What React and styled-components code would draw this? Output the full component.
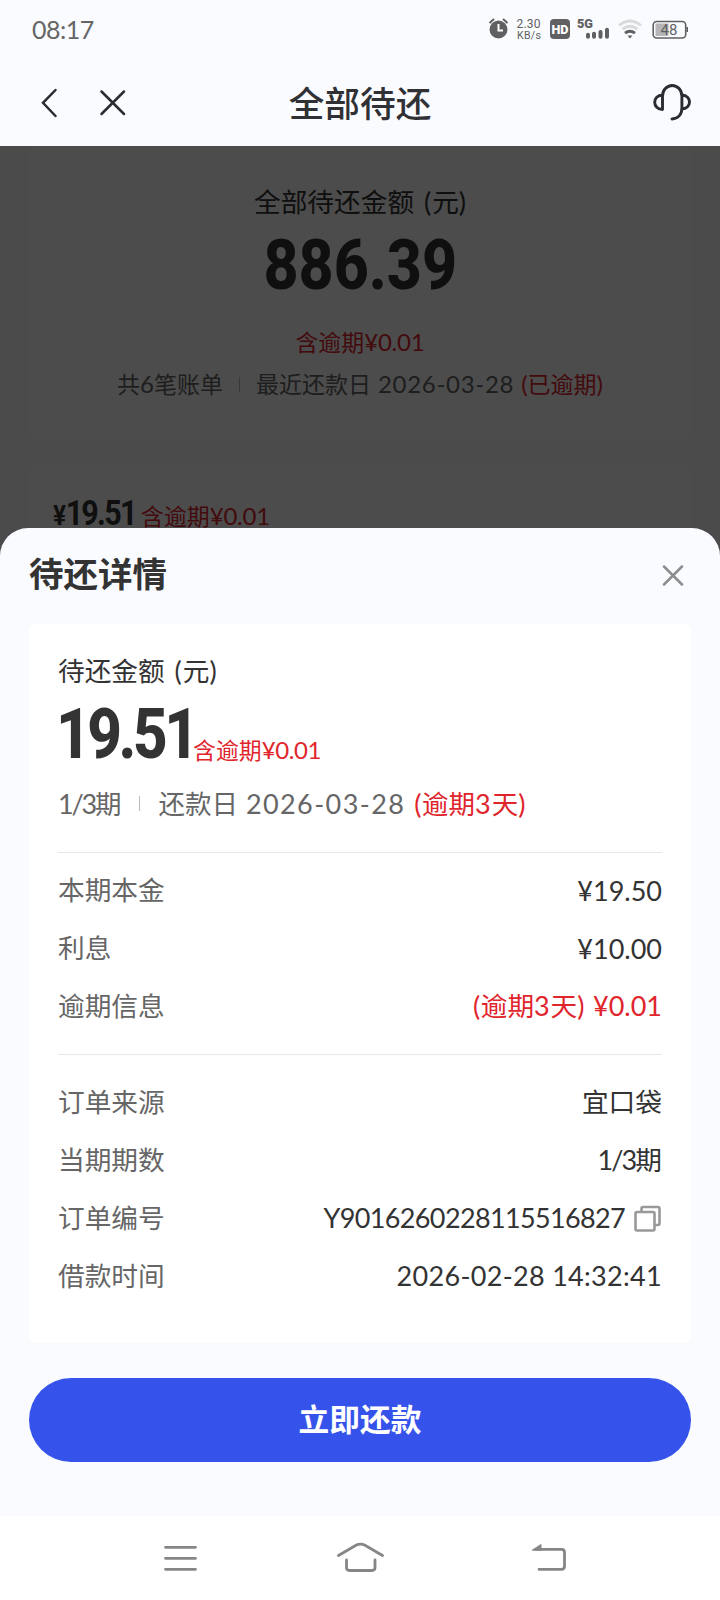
import React from "react";
import styled, { createGlobalStyle } from "styled-components";

const sheetRows = [
  { label: "本期本金", value: "¥19.50" },
  { label: "利息", value: "¥10.00" },
];

export default function App() {
  return (
    <>
      <GlobalStyle />
      <Screen>
        <StatusBar>
          <Clock>08:17</Clock>
          <StatusIcons />
        </StatusBar>
        <Header>
          <BackIcon viewBox="0 0 90 40">
            <path d="M16.500 8L4 20.800L16.500 34" />
            <path d="M62.500 9.500L85 32M85 9.500L62.500 32" />
          </BackIcon>
          <HeaderTitle>全部待还</HeaderTitle>
          <ServiceIcon viewBox="0 0 38 38">
            <path d="M9.500 26.500V13a9.700 10.500 0 0 1 19.400 0v12c0 6.500-4 10.500-9.900 11M9.500 12c-5 0-7.800 3.500-7.800 7.200s2.800 7.300 7.800 7.300M29 12c4.800 0 7.500 3.500 7.500 7s-2.700 7-7.500 7" />
          </ServiceIcon>
        </Header>

        <Content>
          <Summary>
            <SummaryLabel>
              全部待还金额 <Paren>(</Paren>元<Num>)</Num>
            </SummaryLabel>
            <Total>886.39</Total>
            <SummaryOverdue>
              含逾期<Num $size={24} $ls={-0.2}>¥0.01</Num>
            </SummaryOverdue>
            <SummaryMeta>
              <span>共<Num $size={24}>6</Num>笔账单</span>
              <Bar $m={16} />
              <span>最近还款日</span>
              <MetaDate><Num $size={24} $ls={0.7}>2026-03-28</Num></MetaDate>
              <Red><Num $size={24}>(</Num>已逾期<Num $size={24}>)</Num></Red>
            </SummaryMeta>
          </Summary>
          <Bill>
            <BillAmount><small>¥</small>19.51</BillAmount>
            <Red>含逾期<Num $size={24} $ls={-0.2}>¥0.01</Num></Red>
          </Bill>

          <Mask />
          <Sheet>
            <SheetHead>
              <SheetTitle>待还详情</SheetTitle>
              <CloseIcon viewBox="0 0 22 22">
                <path d="M2 1.500L20 19.500M20 1.500L2 19.500" />
              </CloseIcon>
            </SheetHead>
            <Card>
              <CardLabel>
                待还金额 <Paren>(</Paren>元<Num>)</Num>
              </CardLabel>
              <AmountRow>
                <Amount>19.51</Amount>
                <AmountOverdue>含逾期<Num $size={24} $ls={-0.4}>¥0.01</Num></AmountOverdue>
              </AmountRow>
              <CardMeta>
                <span><Num $ls={-2.2}>1/3</Num>期</span>
                <Bar $m={18} />
                <span>还款日</span>
                <MetaDate $wide><Num $ls={1.4}>2026-03-28</Num></MetaDate>
                <Red><Num $ls={0.5}>(</Num>逾期<Num $ls={1}>3</Num>天<Num>)</Num></Red>
              </CardMeta>
              <RepayGroup>
                {sheetRows.map((row) => (
                  <Row key={row.label}>
                    <Label>{row.label}</Label>
                    <Value><Num>{row.value}</Num></Value>
                  </Row>
                ))}
                <Row>
                  <Label>逾期信息</Label>
                  <Value $red>
                    <Num $ls={0.6}>(</Num>逾期<Num $ls={0.8}>3</Num>天<Num $ls={0.8}>) </Num><Num>¥0.01</Num>
                  </Value>
                </Row>
              </RepayGroup>
              <OrderGroup>
                <Row>
                  <Label>订单来源</Label>
                  <Value>宜口袋</Value>
                </Row>
                <Row>
                  <Label>当期期数</Label>
                  <Value><Num $ls={-1.9}>1/3</Num>期</Value>
                </Row>
                <Row>
                  <Label>订单编号</Label>
                  <Value>
                    <Num $ls={-0.65}>Y9016260228115516827</Num>
                    <CopyIcon viewBox="0 0 28 28">
                      <path d="M7.500 7.500V4.500q0-1.500 1.500-1.500h15q1.500 0 1.500 1.500v15q0 1.500-1.500 1.500H21" />
                      <rect x="1.500" y="8" width="19" height="18.500" rx="1.500" />
                    </CopyIcon>
                  </Value>
                </Row>
                <Row>
                  <Label>借款时间</Label>
                  <Value><Num $ls={0.3}>2026-02-28 14:32:41</Num></Value>
                </Row>
              </OrderGroup>
            </Card>
            <PayButton>立即还款</PayButton>
          </Sheet>
        </Content>

        <NavBar>
          <NavIcon viewBox="0 0 60 34">
            <path d="M14.500 6.300H44.500M14.500 17.300H44.500M14.500 28.300H44.500" />
          </NavIcon>
          <NavIcon viewBox="0 0 60 34">
            <path d="M8.500 14.500L26 4.300q4.500-2.500 9 0L52.500 14.500M16.500 19v7.500q0 3 3 3h22.500q3 0 3-3V19" />
          </NavIcon>
          <NavIcon viewBox="0 0 60 34">
            <path d="M27 8.300H52.500q3 0 3 3v14q0 3-3 3H30" />
            <Arrow d="M23.500 9L32 3.500V9Z" />
          </NavIcon>
        </NavBar>
      </Screen>
    </>
  );
}

function StatusIcons() {
  return (
    <StatusSvg viewBox="0 0 210 30">
      {/* alarm */}
      <circle cx="10.500" cy="15.500" r="9" fill="#606062" />
      <path d="M1.500 9L6 5M15 5l4.500 4" stroke="#606062" strokeWidth="2" />
      <path d="M10.500 10v6.500h4.500" stroke="#fff" strokeWidth="2" fill="none" />
      <text x="28.500" y="14" fontSize="12" textLength="24">2.30</text>
      <text x="29" y="24.500" fontSize="10.500" textLength="24">KB/s</text>
      {/* HD */}
      <rect x="62" y="5" width="20" height="20" rx="4" fill="#606062" />
      <StatusMark x="63.500" y="19.800" fontSize="12.500" textLength="17" lengthAdjust="spacingAndGlyphs" $light>
        HD
      </StatusMark>
      {/* signal */}
      <StatusMark x="89" y="13.800" fontSize="12" textLength="16" lengthAdjust="spacingAndGlyphs">
        5G
      </StatusMark>
      <path
        d="M100 20.800v2M106 19.800v3M112.500 18v4.800M119 15.800v7"
        stroke="#606062"
        strokeWidth="4"
        strokeLinecap="round"
      />
      {/* wifi */}
      <path d="M131 11.500q11-9 22 0M134.500 15.200q7.500-6 15 0" stroke="#d9dadc" strokeWidth="2.800" fill="none" />
      <path d="M137 19.200q5-4 10 0" stroke="#606062" strokeWidth="2.800" fill="none" />
      <path d="M139.500 21.500h5L142 24.500z" fill="#606062" />
      {/* battery */}
      <rect x="167.500" y="9.500" width="13" height="12.500" fill="#b5b5b7" />
      <rect x="165.200" y="7.500" width="32.500" height="16.500" rx="3.500" fill="none" stroke="#606062" strokeWidth="1.600" />
      <path d="M199.200 13v5" stroke="#606062" strokeWidth="1.600" />
      <text x="172.500" y="21" fontSize="15" textLength="17">48</text>
    </StatusSvg>
  );
}

const GlobalStyle = createGlobalStyle`
  * {
    box-sizing: border-box;
  }

  body {
    margin: 0;
    font-family: Lato, "Noto Sans CJK SC", sans-serif;
    color: #333;
  }
`;

const Screen = styled.div`
  width: 720px;
  height: 1600px;
  display: flex;
  flex-direction: column;
  background: #fafbff;
  overflow: hidden;
`;

const StatusBar = styled.div`
  height: 58px;
  padding: 0 28px 0 32px;
  display: flex;
  align-items: center;
  justify-content: space-between;
`;

const Clock = styled.div`
  font-size: 25px;
  color: #666;
  letter-spacing: -0.5px;
`;

const StatusSvg = styled.svg`
  width: 210px;
  height: 30px;
  margin-right: -6px;

  text {
    fill: #606062;
    font-family: Roboto, sans-serif;
  }
`;

const StatusMark = styled.text`
  && {
    fill: ${(props) => (props.$light ? "#fff" : "#606062")};
    font-weight: 900;
  }
`;

const Header = styled.div`
  height: 88px;
  padding: 0 29px 0 39px;
  display: grid;
  grid-template-columns: 244px 1fr 244px;
  align-items: center;
`;

const BackIcon = styled.svg`
  width: 90px;
  height: 40px;
  fill: none;
  stroke: #2b2c30;
  stroke-width: 2.5;
  stroke-linecap: round;
`;

const HeaderTitle = styled.div`
  padding: 3px 10px 0 0;
  font-size: 35.7px;
  line-height: 52px;
  font-weight: 500;
  text-align: center;
  white-space: nowrap;
  color: #303135;
`;

const ServiceIcon = styled.svg`
  width: 38px;
  height: 38px;
  justify-self: end;
  fill: none;
  stroke: #2b2c30;
  stroke-width: 2.9;
  stroke-linecap: round;
  stroke-linejoin: round;
`;

const Content = styled.div`
  position: relative;
  height: 1370px;
  overflow: hidden;
`;

const Summary = styled.div`
  height: 294px;
  margin: 0 29px;
  padding-top: 36px;
  background: #fff;
  border-radius: 0 0 6px 6px;
  display: flex;
  flex-direction: column;
  align-items: center;
`;

const SummaryLabel = styled.div`
  height: 40px;
  line-height: 40px;
  font-size: 26.7px;
  white-space: nowrap;
`;

const Total = styled.div`
  height: 84px;
  line-height: 86px;
  font-family: Roboto, sans-serif;
  font-size: 70px;
  font-weight: 800;
  transform: scaleX(0.87);
`;

const Red = styled.span`
  color: #e0252d;
`;

const SummaryOverdue = styled.div`
  margin-top: 16px;
  height: 40px;
  line-height: 40px;
  font-size: 22.9px;
  color: #e0252d;
`;

const SummaryMeta = styled.div`
  height: 44px;
  display: flex;
  align-items: baseline;
  line-height: 44px;
  font-size: 23px;
  color: #666;
  white-space: nowrap;
`;

const Num = styled.span`
  font-family: Lato, sans-serif;
  font-size: ${(props) => props.$size || 27}px;
  letter-spacing: ${(props) => props.$ls || 0}px;
  line-height: 1;
`;

const Paren = styled(Num)`
  margin: 0 1px 0 3px;
`;

const Bar = styled.span`
  width: 1px;
  height: 15px;
  margin: 0 ${(props) => props.$m}px;
  align-self: center;
  background: #bbb;
`;

const MetaDate = styled.span`
  margin: ${(props) => (props.$wide ? "0 9px 0 8px" : "0 7px")};
`;

const Bill = styled.div`
  height: 200px;
  margin: 23px 29px 0;
  padding: 31px 24px;
  background: #fff;
  border-radius: 6px 6px 0 0;
  display: flex;
  align-items: baseline;
  line-height: 40px;
  font-size: 22.9px;
`;

const BillAmount = styled.div`
  width: 88px;
  font-family: Roboto, sans-serif;
  font-size: 35px;
  font-weight: 700;
  letter-spacing: -2px;
  white-space: nowrap;
  transform: scaleX(0.87);
  transform-origin: left;

  small {
    font-size: 28px;
    letter-spacing: -0.5px;
  }
`;

const Mask = styled.div`
  position: absolute;
  inset: 0;
  background: rgba(0, 0, 0, 0.7);
`;

const Sheet = styled.div`
  position: absolute;
  left: 0;
  right: 0;
  top: 382px;
  bottom: 0;
  padding: 0 29px;
  background: #fafbff;
  border-radius: 28px 28px 0 0;
`;

const SheetHead = styled.div`
  height: 96px;
  padding: 0 7px 0 0;
  display: flex;
  align-items: center;
  justify-content: space-between;
`;

const SheetTitle = styled.div`
  padding-bottom: 8px;
  font-size: 34.5px;
  font-weight: 700;
`;

const CloseIcon = styled.svg`
  width: 22px;
  height: 22px;
  stroke: #8c8d90;
  stroke-width: 2.5;
  stroke-linecap: round;
`;

const Card = styled.div`
  height: 719px;
  padding: 27px 29px 0;
  background: #fff;
  border-radius: 6px;
`;

const CardLabel = styled.div`
  height: 40px;
  line-height: 40px;
  font-size: 26.7px;
`;

const AmountRow = styled.div`
  height: 84px;
  display: flex;
`;

const Amount = styled.div`
  width: 137px;
  margin-left: -2px;
  line-height: 86px;
  font-family: Roboto, sans-serif;
  font-size: 70px;
  font-weight: 800;
  letter-spacing: -4px;
  transform: scaleX(0.86);
  transform-origin: left;
`;

const AmountOverdue = styled.div`
  line-height: 40px;
  margin-top: 39px;
  font-size: 22.9px;
  color: #e0252d;
`;

const CardMeta = styled.div`
  height: 57px;
  display: flex;
  align-items: baseline;
  line-height: 58px;
  font-size: 26.5px;
  color: #666;
  white-space: nowrap;
`;

const Group = styled.div`
  border-top: 1px solid #e8e8e8;
`;

const RepayGroup = styled(Group)`
  margin-top: 20px;
  padding: 8px 0 19px;
`;

const OrderGroup = styled(Group)`
  padding: 18px 0 0;
`;

const Row = styled.div`
  height: 58px;
  display: flex;
  align-items: center;
  justify-content: space-between;

  ${OrderGroup} &:last-child {
    height: 57px;
  }
`;

const Label = styled.div`
  font-size: 26.7px;
  line-height: 40px;
  color: #666;
`;

const Value = styled.div`
  display: flex;
  align-items: baseline;
  font-size: 26.7px;
  line-height: 40px;
  white-space: pre;
  color: ${(props) => (props.$red ? "#e0252d" : "#333")};
`;

const CopyIcon = styled.svg`
  width: 28px;
  height: 28px;
  margin-left: 9px;
  align-self: center;
  fill: none;
  stroke: #999;
  stroke-width: 2.6;
  stroke-linejoin: round;
`;

const PayButton = styled.button`
  width: 662px;
  height: 84px;
  margin-top: 35px;
  padding: 0 0 5px;
  border: 0;
  border-radius: 42px;
  background: #3553eb;
  color: #fff;
  font-family: inherit;
  font-size: 30.7px;
  font-weight: 700;
`;

const NavBar = styled.div`
  height: 84px;
  padding: 0 151px;
  background: #fff;
  display: flex;
  align-items: center;
  justify-content: space-between;
`;

const NavIcon = styled.svg`
  width: 60px;
  height: 34px;
  fill: none;
  stroke: #868686;
  stroke-width: 2.8;
  stroke-linecap: round;
`;

const Arrow = styled.path`
  fill: #868686;
  stroke-width: 1;
`;
